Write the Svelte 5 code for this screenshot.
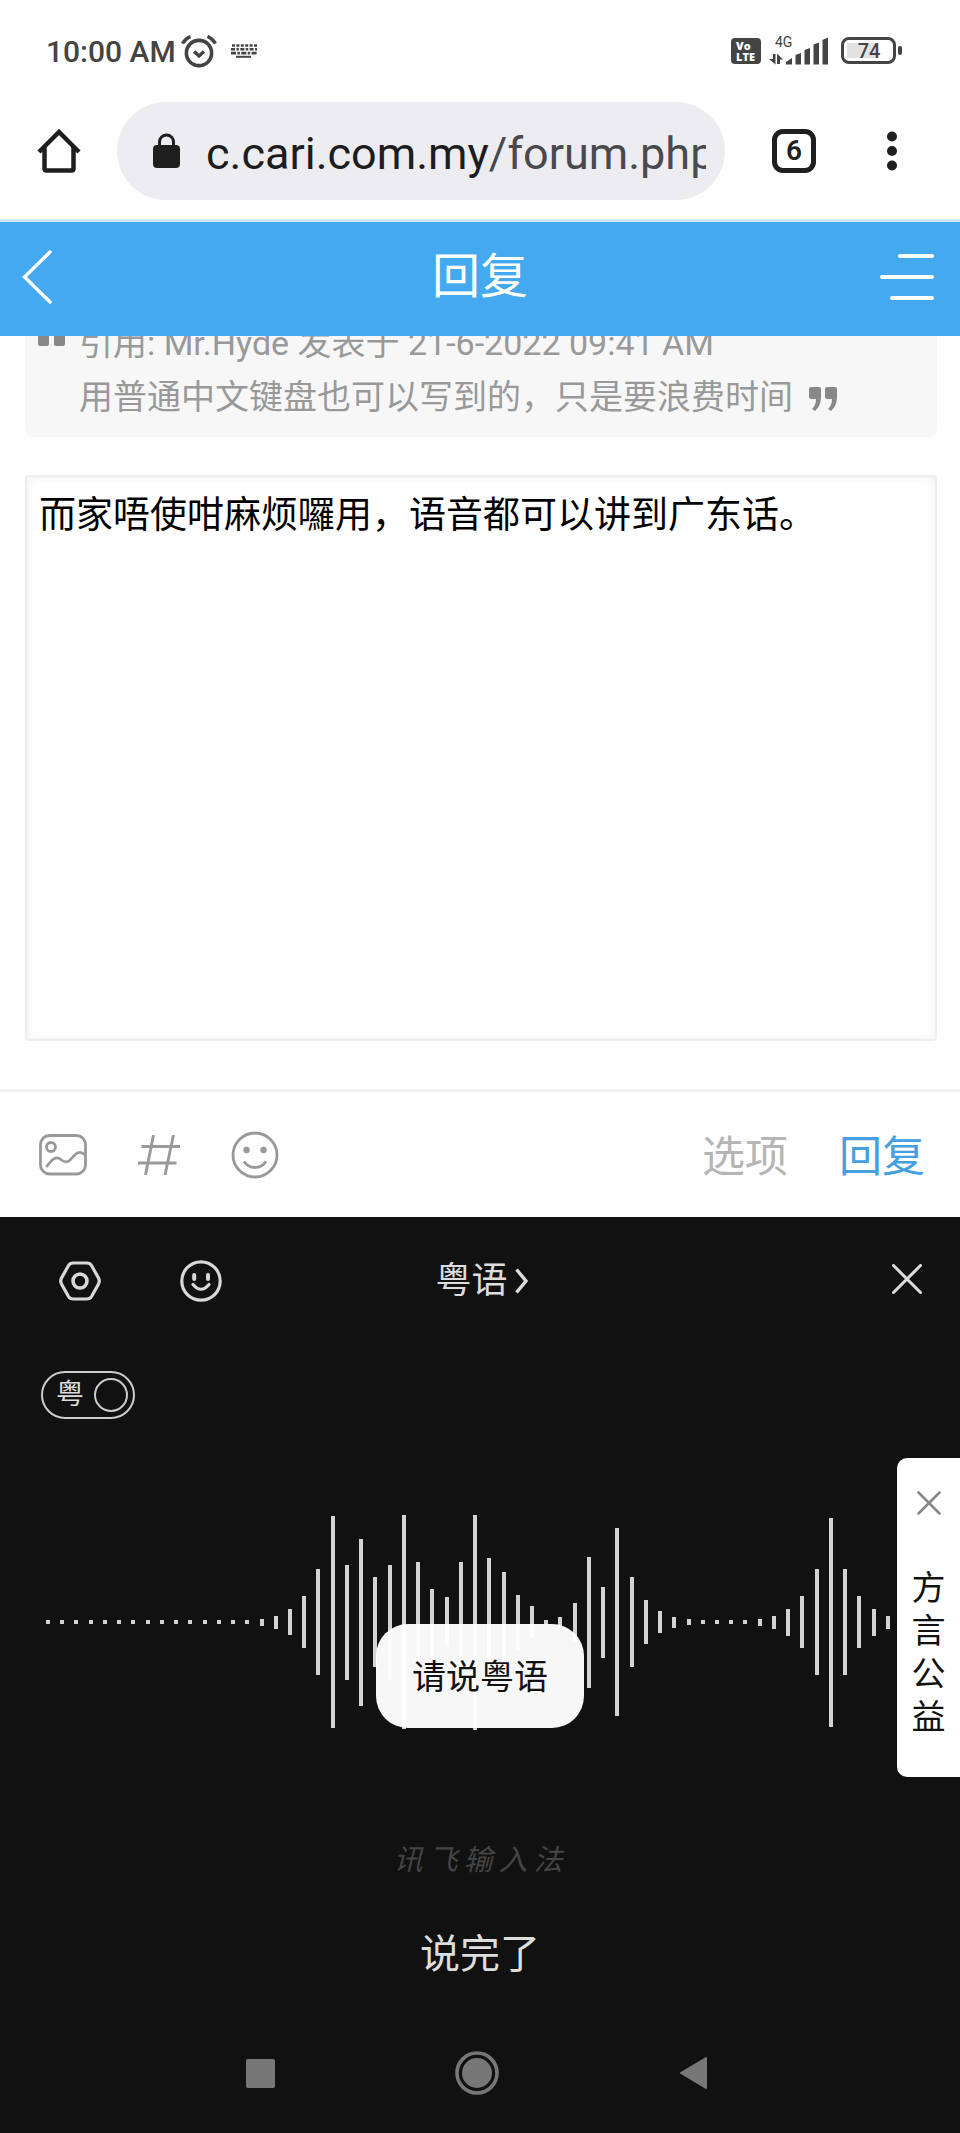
<script>
  let draft = $state('而家唔使咁麻烦囉用，语音都可以讲到广东话。');
  let cantonese = $state(true);

  const dots = (n) => Array(n).fill(4);
  const levels = [
    ...dots(15), 7, 13, 26, 52, 106, 212, 115, 167, 90, 115, 214, 121, 66, 50, 121,
    215, 129, 100, 55, 32, 4, 11, 39, 131, 71, 188, 90, 44, 22, 11, 6,
    ...dots(4), 7, 13, 27, 52, 106, 209, 106, 52, 27, 13
  ];
  const brand = [...'讯飞输入法'];
</script>

<div class="screen">
  <div class="status">
    <span class="clock">10:00 AM</span>
    <svg class="alarm" width="36" height="34" viewBox="0 0 36 34" fill="none" stroke="#444" stroke-width="3.6">
      <circle cx="18" cy="19" r="12.6" />
      <path d="M13 17.500l5 4.500 5-4.500" stroke-width="3.400" />
      <path d="M1.500 9.500Q4.500 4.500 9.500 2.500M34.500 9.500Q31.500 4.500 26.500 2.500" stroke-width="3.400" />
    </svg>
    <svg class="keys" width="26" height="14" viewBox="0 0 26 14" fill="none" stroke="#444" stroke-width="2.600">
      <path d="M1 1.500H26" stroke-dasharray="3 1.400" />
      <path d="M0 5.300H26" stroke-dasharray="4 1.400 2.500 1.400" />
      <path d="M0 9.100H26" stroke-dasharray="5 1.400 2.500 1.400" />
      <path d="M5 12.800H20" stroke-width="2" />
    </svg>
    <span class="grow"></span>
    <svg width="30" height="26" viewBox="0 0 30 26">
      <rect width="30" height="26" rx="4" fill="#444" />
      <text x="5" y="12" class="volte">Vo</text>
      <text x="5" y="23" class="volte">LTE</text>
    </svg>
    <svg class="signal" width="60" height="30" viewBox="0 0 60 30" fill="#444">
      <text x="6" y="12" class="net">4G</text>
      <path d="M4 19h2.500v10.500L0 24h4zM8 29V18.500l6 6h-3V29z" />
      <path d="M17 29.500V27l6-4v6.500zM26.500 29.500V20l5.500-2v11.500zM35.500 29.500V15l5.500-2v16.500zM44.500 29.500V9.500l5.500-2v22zM53.500 29.500V5l5.500-2.500v27z" />
    </svg>
    <svg class="battery" width="62" height="28" viewBox="0 0 62 28">
      <rect x="1.500" y="1.500" width="52" height="24" rx="6.500" fill="none" stroke="#444" stroke-width="3" />
      <rect x="6" y="6" width="30" height="15" rx="1" fill="#e2e2e2" />
      <rect x="57" y="9" width="4" height="9" rx="2" fill="#444" />
      <text x="28" y="21" class="charge">74</text>
    </svg>
  </div>

  <div class="browser">
    <button class="plain" aria-label="Home">
      <svg width="44" height="44" viewBox="0 0 44 44" fill="none" stroke="#1f1f1f" stroke-width="4.500" stroke-linejoin="round">
        <path d="M2 23L22 3l20 20" stroke-linejoin="miter" />
        <path d="M7.500 18v21.500q0 2 2 2h25q2 0 2-2V18" />
      </svg>
    </button>
    <button class="address">
      <svg width="27" height="36" viewBox="0 0 27 36">
        <rect y="12" width="27" height="23" rx="4" fill="#1f1f1f" />
        <path d="M6.500 13V9a7 7 0 0 1 14 0v4" fill="none" stroke="#1f1f1f" stroke-width="3" />
      </svg>
      <span class="url">c.cari.com.my<span class="path">/forum.php</span></span>
    </button>
    <button class="plain tabs" aria-label="Tabs"><span>6</span></button>
    <button class="plain" aria-label="Menu">
      <svg width="12" height="40" viewBox="0 0 12 40" fill="#1f1f1f">
        <circle cx="6" cy="5.500" r="5" /><circle cx="6" cy="20" r="5" /><circle cx="6" cy="34.500" r="5" />
      </svg>
    </button>
  </div>

  <header>
    <button class="plain" aria-label="Back">
      <svg width="30" height="54" viewBox="0 0 30 54" fill="none" stroke="#fff" stroke-width="3.400" stroke-linecap="round">
        <path d="M28 2L2.500 27 28 52" />
      </svg>
    </button>
    <h1>回复</h1>
    <button class="plain" aria-label="More">
      <svg width="54" height="48" viewBox="0 0 54 48" stroke="#fff" stroke-width="4" stroke-linecap="round">
        <path d="M20 3h32M2 24h50M12 45h40" />
      </svg>
    </button>
  </header>

  <main>
    <blockquote>
      <svg class="open" width="29" height="24" viewBox="0 0 29 24" fill="#888">
        <path d="M11 1Q7.500 4 7 10h3q2 0 2 2v10q0 2-2 2H3q-2 0-2-2V12Q1 3 7 0zM27 1q-3.500 3-4 9h3q2 0 2 2v10q0 2-2 2h-7q-2 0-2-2V12q0-9 6-12z" />
      </svg>
      <p>引用: Mr.Hyde 发表于 21-6-2022 09:41 AM</p>
      <p>
        用普通中文键盘也可以写到的，只是要浪费时间
        <svg class="close" width="29" height="24" viewBox="0 0 29 24" fill="#888">
          <path d="M2 0h8q2 0 2 2v8q0 9-6 14L3 22q4-4 4-10H2q-2 0-2-2V2q0-2 2-2zM18 0h8q2 0 2 2v8q0 9-6 14l-3-2q4-4 4-10h-5q-2 0-2-2V2q0-2 2-2z" />
        </svg>
      </p>
    </blockquote>
    <textarea aria-label="回复" bind:value={draft}></textarea>
  </main>

  <div class="actions">
    <button class="plain" aria-label="Image">
      <svg width="48" height="42" viewBox="0 0 48 42" fill="none" stroke="#999" stroke-width="2.800">
        <rect x="1.500" y="1.500" width="45" height="38.500" rx="9" />
        <circle cx="12" cy="13" r="4.500" />
        <path d="M7.500 33C13 25 17 22 21 25c5 4 8 4 12-1s8-8 13-3" />
      </svg>
    </button>
    <button class="plain" aria-label="Topic">
      <svg width="42" height="40" viewBox="0 0 42 40" stroke="#999" stroke-width="2.900">
        <path d="M15.500 0l-8 40M35.500 0l-8.500 40M3.500 11.500H42M0 28h38.500" />
      </svg>
    </button>
    <button class="plain" aria-label="Emoji">
      <svg width="48" height="48" viewBox="0 0 48 48" fill="none" stroke="#999" stroke-width="2.800">
        <circle cx="24" cy="24" r="22" />
        <path d="M13 30.500q4 6 11 6t11-6" />
        <g fill="#999" stroke="none"><circle cx="15.500" cy="19" r="3.200" /><circle cx="32.500" cy="19" r="3.200" /></g>
      </svg>
    </button>
    <span class="grow"></span>
    <button class="plain option">选项</button>
    <button class="plain send">回复</button>
  </div>

  <section class="keyboard">
    <div class="tools">
      <div class="side">
        <button class="plain" aria-label="Settings">
          <svg width="42" height="40" viewBox="0 0 42 40" fill="none" stroke="#d8d8d8" stroke-width="3.200">
            <path d="M14 2h14q3 0 4.500 2.500l7 12.500q1.500 3 0 6l-7 12.500Q31 38 28 38H14q-3 0-4.500-2.500L2.500 23q-1.500-3 0-6l7-12.500Q11 2 14 2z" />
            <circle cx="21" cy="20" r="7" stroke-width="3.600" />
          </svg>
        </button>
        <button class="plain" aria-label="Emoji">
          <svg width="42" height="42" viewBox="0 0 42 42" fill="none" stroke="#d8d8d8" stroke-width="3.200">
            <circle cx="21" cy="21" r="19.200" />
            <path d="M13 24.500q8 9.500 16 0" stroke-linecap="round" />
            <path d="M14.200 15v4M28 15v4" stroke-width="4" stroke-linecap="round" />
          </svg>
        </button>
      </div>
      <button class="plain lang">
        粤语
        <svg width="13" height="26" viewBox="0 0 13 26" fill="none" stroke="#ddd" stroke-width="3.400">
          <path d="M1.500 1.500L11 13 1.500 24.500" />
        </svg>
      </button>
      <div class="side end">
        <button class="plain" aria-label="Close">
          <svg width="30" height="30" viewBox="0 0 30 30" stroke="#ddd" stroke-width="3" stroke-linecap="round">
            <path d="M1.500 1.500l27 27M28.500 1.500l-27 27" />
          </svg>
        </button>
      </div>
    </div>

    <label class="toggle">粤<input type="checkbox" bind:checked={cantonese} /></label>

    <div class="listen">
      <div class="wave">
        {#each levels as level}
          <i style="height:{level}px"></i>
        {/each}
      </div>
      <div class="toast" role="status">请说粤语</div>
      <aside>
        <button class="plain" aria-label="Dismiss">
          <svg width="24" height="24" viewBox="0 0 24 24" stroke="#888" stroke-width="2.600" stroke-linecap="round">
            <path d="M1.500 1.500l21 21M22.500 1.500l-21 21" />
          </svg>
        </button>
        <a href="#dialect">方言公益</a>
      </aside>
    </div>

    <div class="brand">
      {#each brand as glyph}<span>{glyph}</span>{/each}
    </div>
    <button class="plain done">说完了</button>

    <nav>
      <button class="plain" aria-label="Recent apps">
        <svg width="29" height="29" viewBox="0 0 29 29"><rect width="29" height="29" rx="2" fill="#777" /></svg>
      </button>
      <button class="plain" aria-label="Home screen">
        <svg width="44" height="44" viewBox="0 0 44 44">
          <circle cx="22" cy="22" r="20" fill="none" stroke="#777" stroke-width="3.600" />
          <circle cx="22" cy="22" r="15" fill="#777" />
        </svg>
      </button>
      <button class="plain" aria-label="Go back">
        <svg width="29" height="34" viewBox="0 0 29 34">
          <path d="M27 2v30L2 17z" fill="#777" stroke="#777" stroke-width="2" stroke-linejoin="round" />
        </svg>
      </button>
    </nav>
  </section>
</div>

<style>
  :global(body) {
    margin: 0;
    background: #fefefe;
  }
  .screen {
    display: flex;
    flex-direction: column;
    min-height: 100vh;
    overflow: hidden;
    background: #fefefe;
    font-family: Roboto, 'Noto Sans CJK SC', sans-serif;
  }
  svg {
    display: block;
    flex: none;
  }
  .plain {
    margin: 0;
    padding: 0;
    border: 0;
    background: none;
    color: inherit;
    font: inherit;
    cursor: pointer;
  }
  .grow {
    flex: 1;
  }

  .status {
    display: flex;
    align-items: center;
    height: 102px;
    padding: 0 57px 0 46px;
    color: #444;
  }
  .clock {
    font-size: 30px;
    font-weight: 500;
    line-height: 36px;
    margin-top: 2px;
  }
  .alarm {
    margin-left: 5px;
  }
  .keys {
    margin-left: 14px;
  }
  .signal {
    margin: 0 12px 0 8px;
    padding-bottom: 2px;
  }
  .volte {
    fill: #fff;
    font: 800 11px 'Open Sans', sans-serif;
  }
  .net {
    font-size: 14px;
  }
  .charge {
    fill: #444;
    font-size: 20px;
    font-weight: 500;
    text-anchor: middle;
  }

  .browser {
    display: flex;
    align-items: center;
    padding: 0 62px 19px 37px;
    border-bottom: 3px solid #d3e8f6;
  }
  .address {
    display: flex;
    flex: 1;
    align-items: center;
    gap: 26px;
    min-width: 0;
    height: 98px;
    margin: 0 47px 0 36px;
    padding: 0 19px 0 36px;
    border: 0;
    border-radius: 49px;
    background: #ededf1;
    text-align: left;
  }
  .url {
    flex: 1;
    overflow: hidden;
    white-space: nowrap;
    color: #1d1d20;
    font: 45px/60px Roboto, sans-serif;
    margin-top: 5px;
  }
  .path {
    color: #4a4a4e;
  }
  .tabs {
    display: grid;
    place-items: center;
    width: 44px;
    height: 44px;
    box-sizing: border-box;
    margin-right: 70px;
    border: 5px solid #1f1f1f;
    border-radius: 11px;
    color: #1f1f1f;
    font-size: 28px;
    font-weight: 600;
    line-height: 32px;
  }

  header {
    position: relative;
    z-index: 1;
    display: flex;
    align-items: center;
    justify-content: space-between;
    height: 110px;
    padding: 0 26px 4px 22px;
    background: #44a9ee;
    color: #fff;
  }
  h1 {
    flex: 1;
    margin: 0 0 0 28px;
    text-align: center;
    font-size: 48px;
    font-weight: 400;
    line-height: 64px;
  }

  main {
    display: flex;
    flex-direction: column;
    gap: 38px;
    margin-top: -33px;
    padding: 0 23px 48px 25px;
  }
  blockquote {
    position: relative;
    margin: 0;
    padding: 13px 12px 13px 54px;
    border-radius: 8px;
    background: #f7f7f7;
    color: #999;
    font-size: 34px;
    line-height: 54px;
  }
  .open {
    position: absolute;
    left: 12px;
    top: 19px;
  }
  .close {
    margin-top: 4px;
  }
  p {
    display: flex;
    align-items: center;
    gap: 16px;
    margin: 0;
  }
  textarea {
    display: block;
    box-sizing: border-box;
    width: 100%;
    height: 566px;
    padding: 17px 12px;
    border: 2px solid #eee;
    border-radius: 4px;
    outline: 0;
    background: #fefefe;
    box-shadow: inset 0 0 8px #f0f0f0;
    resize: none;
    color: #000;
    font: 37px/44px Roboto, 'Noto Sans CJK SC', sans-serif;
  }

  .actions {
    display: flex;
    align-items: center;
    gap: 51px;
    height: 125px;
    padding: 0 35px 0 39px;
    border-top: 3px solid #f2f2f2;
    font-size: 43px;
    line-height: 56px;
  }
  .option,
  .send {
    padding-top: 4px;
  }
  .option {
    color: #b5b5b5;
  }
  .send {
    color: #44a0e0;
  }

  .keyboard {
    display: flex;
    flex: 1;
    flex-direction: column;
    background: #111;
    color: #ddd;
  }
  .tools {
    display: flex;
    align-items: center;
    height: 128px;
    padding: 0 38px 0 59px;
  }
  .side {
    display: flex;
    flex: 1;
    gap: 79px;
    align-items: center;
  }
  .end {
    justify-content: flex-end;
    padding-bottom: 4px;
  }
  .lang {
    display: flex;
    align-items: center;
    gap: 7px;
    font-size: 36px;
    line-height: 48px;
  }
  .tools .lang {
    margin-right: 18px;
  }
  .toggle {
    display: flex;
    align-items: center;
    align-self: flex-start;
    justify-content: space-between;
    box-sizing: border-box;
    width: 94px;
    height: 48px;
    margin: 26px 0 0 41px;
    padding: 0 5px 0 13px;
    border: 2px solid #ccc;
    border-radius: 24px;
    font-size: 28px;
    line-height: 40px;
  }
  .toggle input {
    appearance: none;
    width: 34px;
    height: 34px;
    margin: 0;
    border: 2px solid #ccc;
    border-radius: 50%;
  }
  .listen {
    position: relative;
    margin-top: 95px;
  }
  .wave {
    display: flex;
    align-items: center;
    justify-content: space-between;
    height: 216px;
    padding: 0 70px 0 46px;
  }
  .wave i {
    width: 4px;
    background: #d3d3d3;
  }
  .toast {
    position: absolute;
    left: 50%;
    top: 110px;
    transform: translateX(-50%);
    box-sizing: border-box;
    padding: 31px 36px 29px;
    border-radius: 32px;
    background: rgba(255, 255, 255, 0.97);
    color: #111;
    font-size: 34px;
    line-height: 44px;
    white-space: nowrap;
  }
  aside {
    position: absolute;
    right: 0;
    top: -56px;
    display: flex;
    flex-direction: column;
    align-items: center;
    gap: 52px;
    width: 63px;
    padding: 33px 0 38px;
    border-radius: 10px 0 0 10px;
    background: #fff;
  }
  aside a {
    width: 34px;
    color: #111;
    font-size: 34px;
    line-height: 43px;
    text-decoration: none;
    word-break: break-all;
  }
  .brand {
    display: flex;
    justify-content: center;
    gap: 6px;
    margin: 112px 4px 0 0;
    color: #444;
    font-size: 29px;
    font-style: italic;
    line-height: 36px;
  }
  .done {
    align-self: center;
    margin-top: 51px;
    font-size: 40px;
    line-height: 52px;
  }
  nav {
    display: flex;
    align-items: center;
    justify-content: space-between;
    height: 118px;
    margin-top: 33px;
    padding: 0 252px 2px 246px;
  }
</style>
